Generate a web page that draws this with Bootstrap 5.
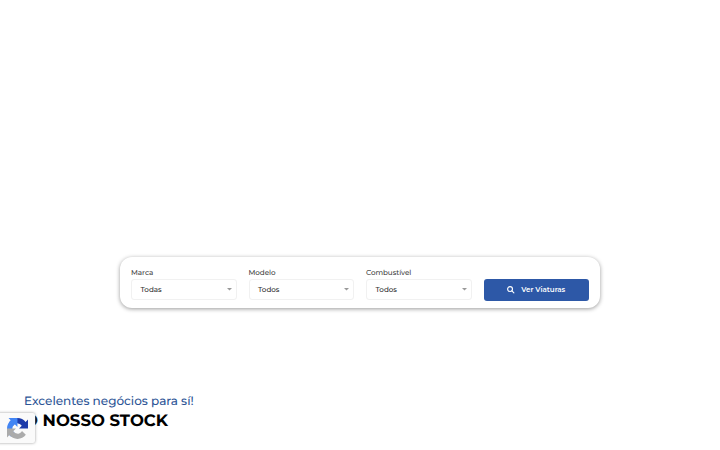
<!DOCTYPE html>
<html lang="pt">
<head>
    <meta charset="utf-8">
    <meta name="viewport" content="width=device-width, initial-scale=1">
    <title>O Nosso Stock</title>
    <link href="https://cdn.jsdelivr.net/npm/bootstrap@5.3.0/dist/css/bootstrap.min.css" rel="stylesheet">
    <style>
        body {
            font-family: Montserrat, Inter, sans-serif;
            height: 450px;
            overflow: hidden;
            color: #000;
            text-rendering: geometricPrecision;
        }

        .hero {
            height: 393px;
            padding-top: 257px;
        }

        .search-box {
            width: 480px;
            height: 51px;
            padding: 11px;
            border-radius: 12px;
            box-shadow: 0 1px 4px rgba(0, 0, 0, 0.4);
        }

        .search-box form {
            gap: 12px;
        }

        .search-box label {
            display: block;
            font-size: 7.2px;
            font-weight: 500;
            line-height: 9px;
            height: 11px;
            color: #444;
            letter-spacing: -0.05px;
        }

        .fake-select {
            height: 21px;
            padding: 0 4px 0 8.5px;
            border: 1px solid #f1f1f1;
            border-radius: 3px;
            font-size: 7.2px;
            line-height: 10px;
            font-weight: 500;
            color: #333;
        }

        .fake-select span {
            padding-top: 1px;
        }

        .fake-select svg {
            width: 5px;
            height: 3px;
        }

        .btn-search {
            height: 21.5px;
            padding: 0;
            border: 0;
            border-radius: 3px;
            background: #2d58a7;
            color: #fff;
            font-size: 7.1px;
            line-height: 10px;
            font-weight: 600;
            margin-bottom: -0.5px;
        }

        .btn-search:hover {
            background: #244a90;
            color: #fff;
        }

        .btn-search svg {
            width: 7.5px;
            height: 7.5px;
            margin-right: 6.5px;
        }

        .stock {
            padding-left: 24px;
        }

        .subtitle {
            font-size: 12px;
            font-weight: 500;
            line-height: 17px;
            color: #2d5596;
        }

        .stock h2 {
            font-size: 16.5px;
            font-weight: 700;
            line-height: 23px;
        }

        .captcha-badge {
            left: -3px;
            top: 413px;
            width: 38px;
            height: 30px;
            padding: 5px 0 0 10px;
            border-radius: 2px;
            background: #fafafa;
            box-shadow: 0 0 3px #999;
        }
    </style>
</head>
<body>
    <section class="hero">
        <div class="search-box bg-white mx-auto">
            <form class="d-flex align-items-end">
                <div class="flex-fill w-25">
                    <label>Marca</label>
                    <div class="fake-select d-flex align-items-center justify-content-between">
                        <span>Todas</span>
                        <svg viewBox="0 0 5 3"><path d="M0 0h5L2.5 2.6z" fill="#999"/></svg>
                    </div>
                </div>
                <div class="flex-fill w-25">
                    <label>Modelo</label>
                    <div class="fake-select d-flex align-items-center justify-content-between">
                        <span>Todos</span>
                        <svg viewBox="0 0 5 3"><path d="M0 0h5L2.5 2.6z" fill="#999"/></svg>
                    </div>
                </div>
                <div class="flex-fill w-25">
                    <label>Combustível</label>
                    <div class="fake-select d-flex align-items-center justify-content-between">
                        <span>Todos</span>
                        <svg viewBox="0 0 5 3"><path d="M0 0h5L2.5 2.6z" fill="#999"/></svg>
                    </div>
                </div>
                <button type="button" class="btn btn-search flex-fill w-25 d-flex align-items-center justify-content-center">
                    <svg viewBox="0 0 16 16" fill="none" stroke="#fff" stroke-width="2.4" stroke-linecap="round"><circle cx="6.5" cy="6.5" r="5.2"/><path d="M10.5 10.5l4.2 4.2"/></svg>
                    <span>Ver Viaturas</span>
                </button>
            </form>
        </div>
    </section>

    <section class="stock">
        <div class="subtitle">Excelentes negócios para sí!</div>
        <h2 class="mb-0">O NOSSO STOCK</h2>
    </section>

    <div class="captcha-badge position-absolute">
        <svg class="d-block" width="21" height="21" viewBox="0 0 64 64">
            <path fill="#1c3aa9" d="M64 31.955l-.033-1.37V4.687l-7.16 7.16C50.948 4.674 42.033.093 32.05.093c-10.4 0-19.622 4.96-25.458 12.64l11.736 11.86a15.55 15.55 0 0 1 4.754-5.334c2.05-1.6 4.952-2.906 8.968-2.906.485 0 .86.057 1.135.163 4.976.393 9.288 3.14 11.828 7.124l-8.307 8.307L64 31.953"/>
            <path fill="#4285f4" d="M31.862.094l-1.37.033H4.594l7.16 7.16C4.58 13.147 0 22.06 0 32.046c0 10.4 4.96 19.622 12.64 25.458L24.5 45.768a15.55 15.55 0 0 1-5.334-4.754c-1.6-2.05-2.906-4.952-2.906-8.968 0-.485.057-.86.163-1.135.393-4.976 3.14-9.288 7.124-11.828l8.307 8.307L31.86.095"/>
            <path fill="#ababab" d="M.001 32.045l.033 1.37v25.898l7.16-7.16c5.86 7.173 14.774 11.754 24.76 11.754 10.4 0 19.622-4.96 25.458-12.64l-11.736-11.86a15.55 15.55 0 0 1-4.754 5.334c-2.05 1.6-4.952 2.906-8.968 2.906-.485 0-.86-.057-1.135-.163-4.976-.393-9.288-3.14-11.828-7.124l8.307-8.307c-10.522.04-22.4.066-27.295-.005"/>
        </svg>
    </div>

    <script src="https://cdn.jsdelivr.net/npm/bootstrap@5.3.0/dist/js/bootstrap.bundle.min.js"></script>
</body>
</html>
